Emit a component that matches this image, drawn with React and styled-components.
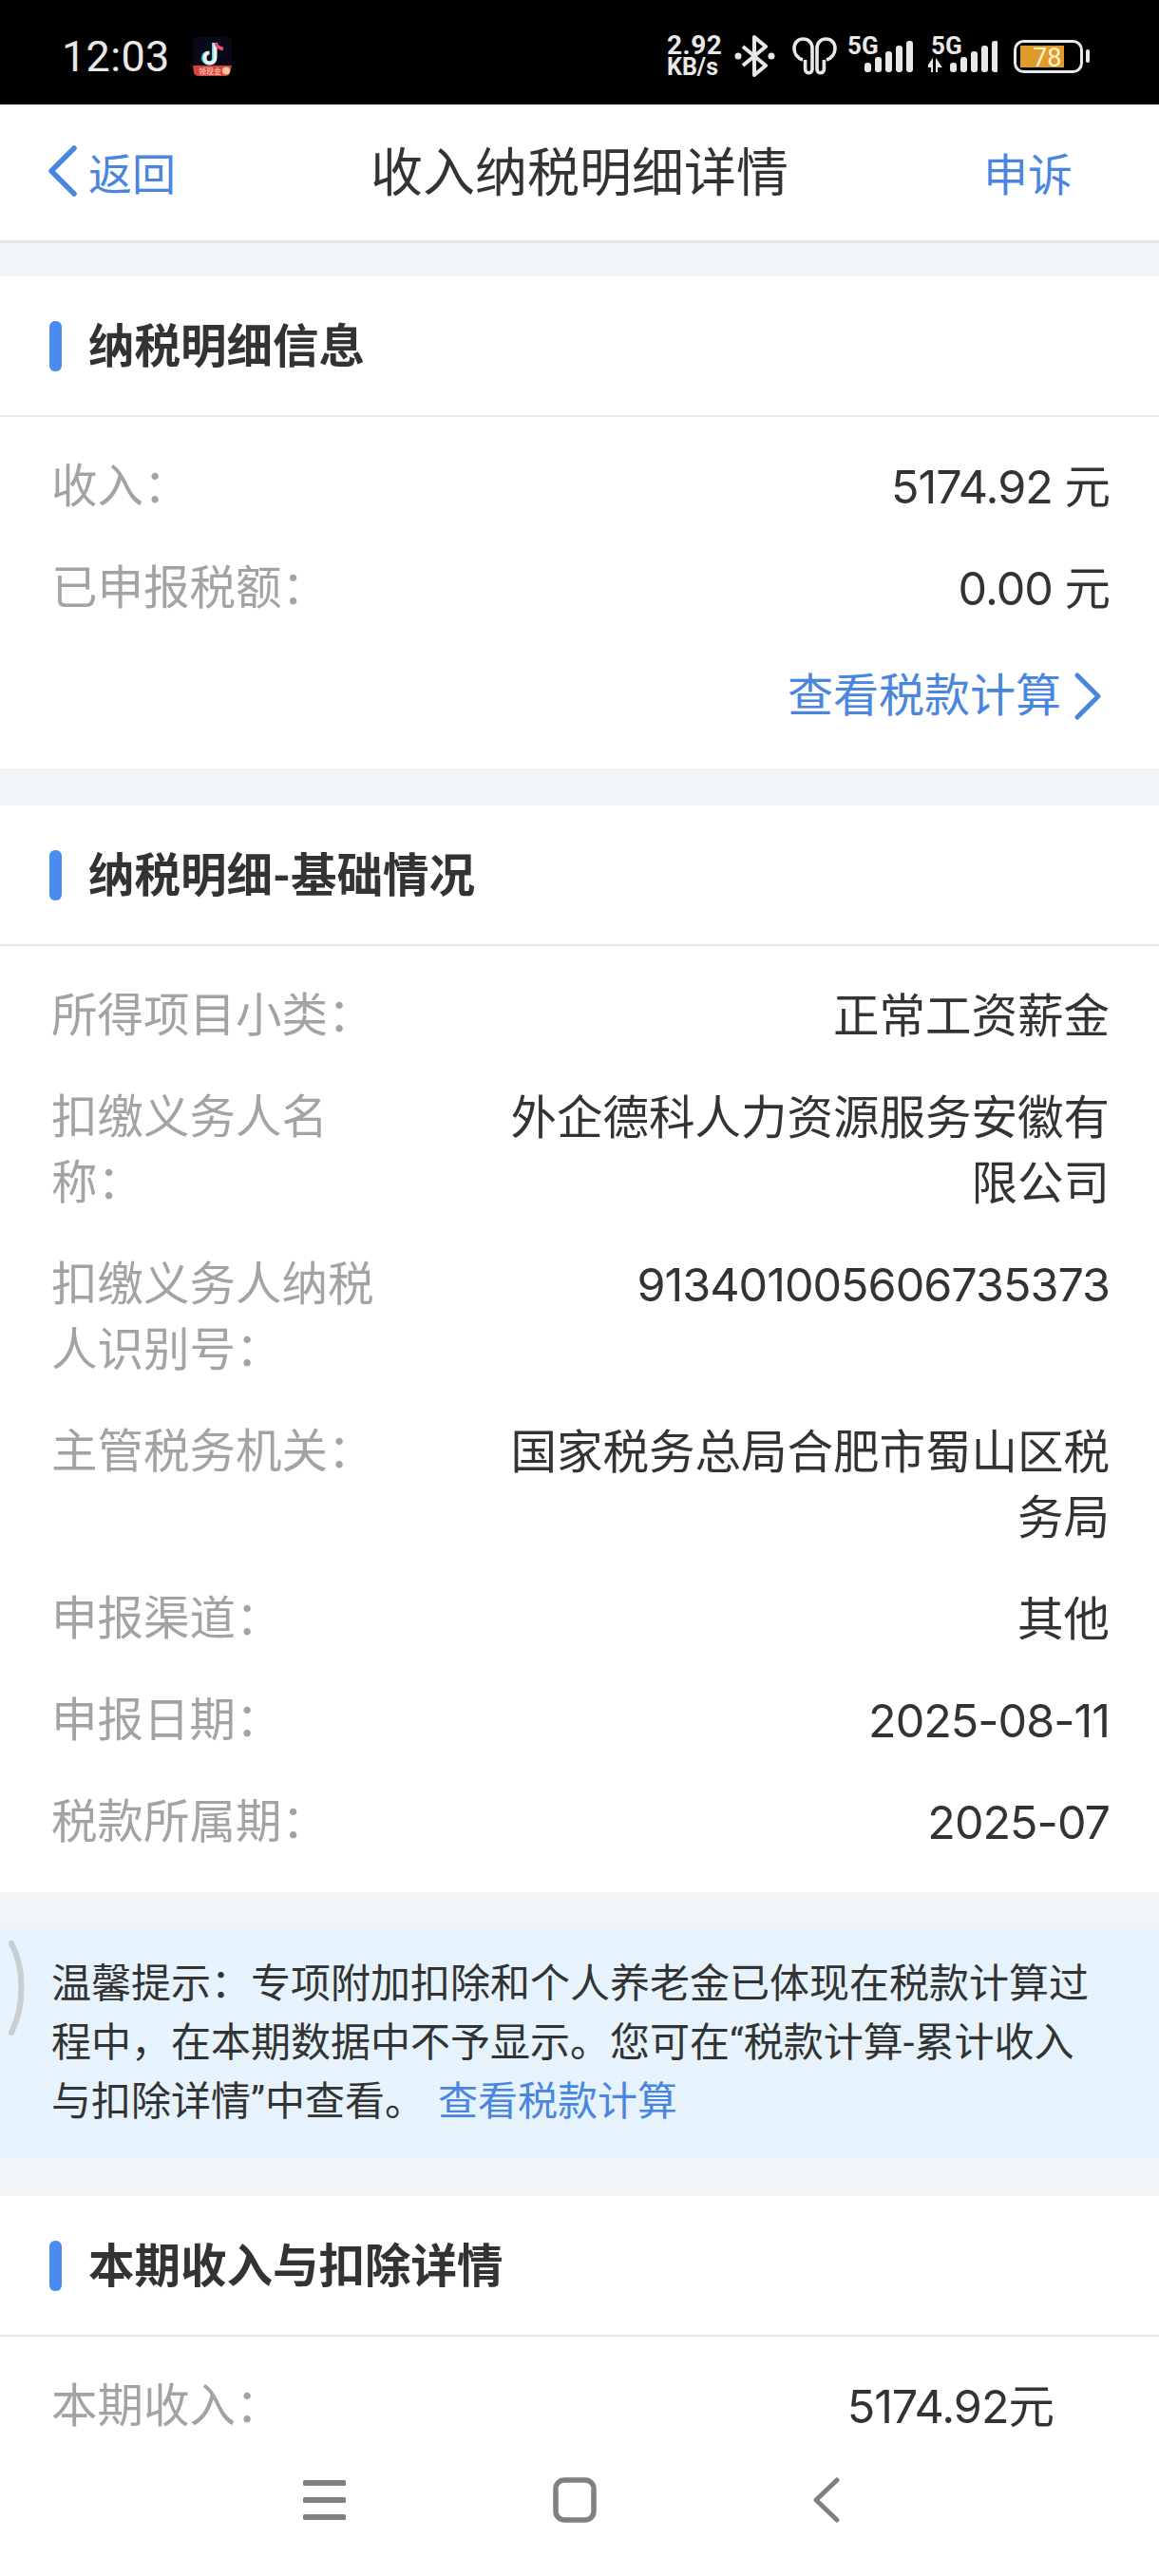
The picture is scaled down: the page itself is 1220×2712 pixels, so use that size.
import React from 'react';
import styled, { createGlobalStyle } from 'styled-components';

const BLUE = '#4a86e0';
const COLON = '\uFF1A';
const COMMA = '\uFF0C';

const GlobalStyle = createGlobalStyle`
  html, body {
    margin: 0;
    padding: 0;
    background: #f2f5f8;
    font-family: Roboto, "Noto Sans CJK SC", sans-serif;
  }
  * { box-sizing: border-box; }
`;

//#region style
const Phone = styled.div`
  position: relative;
  width: 1220px;
  height: 2712px;
  overflow: hidden;
  background: #f2f5f8;
`;

const StatusBar = styled.div`
  display: flex;
  align-items: center;
  height: 110px;
  padding: 8px 72px 0 65px;
  background: #000;
  color: #e8e8e8;
`;

const Time = styled.span`
  font-size: 45px;
  line-height: 1;
  letter-spacing: 0.3px;
  margin-right: 24px;
`;

const StatusRight = styled.div`
  display: flex;
  align-items: center;
  margin-left: auto;
`;

const Speed = styled.div`
  display: flex;
  flex-direction: column;
  width: 58px;
  margin-right: 13px;
  font-family: Roboto, sans-serif;
  font-weight: 700;
  text-align: left;
  white-space: nowrap;
`;

const SpeedValue = styled.span`
  font-size: 28px;
  line-height: 24px;
  letter-spacing: 0.5px;
`;

const SpeedUnit = styled.span`
  font-size: 25px;
  line-height: 22px;
`;

const StatusIcon = styled.svg`
  display: block;
  flex: none;
  margin-right: ${p => p.$gap || 0}px;
`;

const Header = styled.header`
  display: grid;
  grid-template-columns: 1fr auto 1fr;
  align-items: center;
  height: 146px;
  padding: 0 91px 3px;
  background: #fff;
  border-bottom: 3px solid #e4e4e4;
`;

const BackLink = styled.a`
  display: flex;
  align-items: center;
  gap: 11px;
  margin-left: -41px;
  font-size: 46px;
  color: ${BLUE};
`;

const Title = styled.h1`
  margin: 0;
  font-size: 55px;
  font-weight: 400;
  line-height: 1;
  padding-top: 4px;
  color: #333;
`;

const Appeal = styled.a`
  justify-self: end;
  font-size: 47px;
  color: ${BLUE};
`;

const Content = styled.main`
  padding-top: 35px;
`;

const Section = styled.section`
  margin-bottom: ${p => p.$gap || 0}px;
  background: #fff;
`;

const SectionHead = styled.div`
  display: flex;
  align-items: center;
  gap: 28px;
  height: 148px;
  padding-left: 52px;
  border-bottom: 2px solid #e8e8e8;
`;

const Marker = styled.span`
  width: 13px;
  height: 53px;
  border-radius: 6px;
  background: #4a8bf0;
`;

const SectionTitle = styled.h2`
  margin: 0;
  padding-top: 4px;
  font-size: 48.5px;
  font-weight: 700;
  line-height: 1;
  color: #333;
`;

const RowList = styled.div`
  padding: 20px 52px 20px 54px;
`;

const Row = styled.div`
  display: flex;
  justify-content: space-between;
  padding: 19px ${p => p.$inset || 0}px 19px 0;
  font-size: 48.5px;
  line-height: 69px;
`;

const Label = styled.div`
  flex: none;
  width: 342px;
  color: #a3a3a3;
`;

const Value = styled.div`
  width: 640px;
  text-align: right;
  font-family: Inter, "Noto Sans CJK SC", sans-serif;
  letter-spacing: ${p => (p.$num ? '-1px' : '0')};
  color: #333;
`;

const CalcLink = styled.a`
  display: flex;
  justify-content: flex-end;
  align-items: center;
  gap: 14px;
  padding: 0 61px 42px 0;
  margin-top: 5px;
  font-size: 48px;
  line-height: 69px;
  color: ${BLUE};
`;

const Tip = styled.div`
  position: relative;
  margin-bottom: 41px;
  padding: 27px 54px;
  background: #e6f3fc;
  font-size: 42px;
  line-height: 62px;
  color: #333;
`;

const TipLink = styled.a`
  margin-left: 14px;
  color: ${BLUE};
`;

const EdgeHandle = styled.svg`
  position: absolute;
  left: 8px;
  top: 11px;
`;

const NavBar = styled.nav`
  position: absolute;
  left: 0;
  right: 0;
  bottom: 0;
  display: flex;
  align-items: center;
  height: 146px;
  padding: 0 0 15px 319px;
  background: #fff;
`;

const NavIcon = styled.svg`
  display: block;
  flex: none;
  margin-right: ${p => p.$gap || 0}px;
`;
//#endregion style

const Bluetooth = () => (
  <StatusIcon $gap={18} width="43" height="44" viewBox="0 0 43 44" fill="none" stroke="#e8e8e8" strokeWidth="4" strokeLinejoin="round">
    <path d="M9 12 L33 32 L21 42 L21 2 L33 12 L9 32" />
    <circle cx="4" cy="22" r="3.5" fill="#e8e8e8" stroke="none" />
    <circle cx="39" cy="22" r="3.5" fill="#e8e8e8" stroke="none" />
  </StatusIcon>
);

const Earbuds = () => (
  <StatusIcon $gap={11} width="47" height="40" viewBox="0 0 47 40" fill="none" stroke="#e8e8e8" strokeWidth="3.6">
    <path d="M11 24 C5 22 2 17 2 12 C2 6 6 2 11.5 2 C17 2 21 6 21 12 L21 34 A3.6 3.6 0 0 1 13.6 34 L13.6 24" />
    <path d="M36 24 C42 22 45 17 45 12 C45 6 41 2 35.5 2 C30 2 26 6 26 12 L26 34 A3.6 3.6 0 0 0 33.4 34 L33.4 24" />
  </StatusIcon>
);

const SignalBars = ({ x, withArrows }) => (
  <>
    {[10, 16, 22, 28, 33].map((h, i) => (
      <rect key={i} x={x + i * 11} y={43 - h} width="7" height={h} rx="3" fill="#e8e8e8" />
    ))}
    {withArrows && (
      <path d="M4 37 L0 37 L4 31 Z M4 37 L4 43 M9 37 L9 31 L13 37 Z M9 37 L9 43" stroke="#e8e8e8" strokeWidth="2" fill="#e8e8e8" />
    )}
  </>
);

const Signal = ({ width, gap, labelX, barsX, withArrows }) => (
  <StatusIcon $gap={gap} width={width} height="52" viewBox={`0 0 ${width} 52`}>
    <text x={labelX} y="24" fontFamily="Roboto, sans-serif" fontWeight="700" fontSize="26" fill="#e8e8e8">5G</text>
    <SignalBars x={barsX} withArrows={withArrows} />
  </StatusIcon>
);

const Battery = () => (
  <StatusIcon width="81" height="35" viewBox="0 0 81 35">
    <rect x="1.5" y="1.5" width="70" height="32" rx="9" fill="none" stroke="#e8e8e8" strokeWidth="3" />
    <rect x="7" y="6" width="46" height="23" fill="#e09a28" />
    <text x="20" y="28" fontFamily="Roboto, sans-serif" fontSize="27" fill="#fff3d0">78</text>
    <rect x="76" y="10" width="4" height="14" rx="2" fill="#e8e8e8" />
  </StatusIcon>
);

const AppBadge = () => (
  <StatusIcon width="41" height="41" viewBox="0 0 41 41">
    <rect width="41" height="36" rx="5" fill="#080818" />
    <path d="M22 6 L22 22 A5.5 5.5 0 1 1 16 16.5" fill="none" stroke="#35e0e0" strokeWidth="4" />
    <path d="M23.5 6 L23.5 22 A5.5 5.5 0 1 1 17.5 16.5" fill="none" stroke="#f0f0f0" strokeWidth="4" />
    <path d="M24 6 C25 10 28 12 32 12.5" fill="none" stroke="#f05070" strokeWidth="3.5" />
    <path d="M0 30 L41 30 L39 38 Q38 41 34 41 L6 41 Q2 41 1 38 Z" fill="#d8413c" />
    <text x="6" y="39" fontFamily='"Noto Sans CJK SC", sans-serif' fontSize="8" fill="#ffe0d0">领现金</text>
    <circle cx="35" cy="35.5" r="4" fill="#f4c9a0" />
  </StatusIcon>
);

const rowsBasic = [
  ['所得项目小类', '正常工资薪金'],
  ['扣缴义务人名称', '外企德科人力资源服务安徽有限公司'],
  ['扣缴义务人纳税人识别号', '913401005606735373', true],
  ['主管税务机关', '国家税务总局合肥市蜀山区税务局'],
  ['申报渠道', '其他'],
  ['申报日期', '2025-08-11', true],
  ['税款所属期', '2025-07', true],
];

const tipText = `温馨提示${COLON}专项附加扣除和个人养老金已体现在税款计算过程中${COMMA}在本期数据中不予显示。您可在“税款计算-累计收入与扣除详情”中查看。`;

const App = () => {
  return (
    <Phone>
      <GlobalStyle />
      <StatusBar>
        <Time>12:03</Time>
        <AppBadge />
        <StatusRight>
          <Speed>
            <SpeedValue>2.92</SpeedValue>
            <SpeedUnit>KB/s</SpeedUnit>
          </Speed>
          <Bluetooth />
          <Earbuds />
          <Signal width="70" gap={15} labelX={0} barsX={18} />
          <Signal width="73" gap={17} labelX={3} barsX={23} withArrows />
          <Battery />
        </StatusRight>
      </StatusBar>

      <Header>
        <BackLink>
          <svg width="32" height="54" viewBox="0 0 32 54" fill="none" stroke={BLUE} strokeWidth="5.5" strokeLinecap="round" strokeLinejoin="round">
            <path d="M28 3 L4 27 L28 51" />
          </svg>
          返回
        </BackLink>
        <Title>收入纳税明细详情</Title>
        <Appeal>申诉</Appeal>
      </Header>

      <Content>
        <Section $gap={39}>
          <SectionHead>
            <Marker />
            <SectionTitle>纳税明细信息</SectionTitle>
          </SectionHead>
          <RowList>
            <Row>
              <Label>收入{COLON}</Label>
              <Value $num>5174.92 元</Value>
            </Row>
            <Row>
              <Label>已申报税额{COLON}</Label>
              <Value $num>0.00 元</Value>
            </Row>
          </RowList>
          <CalcLink>
            查看税款计算
            <svg width="28" height="50" viewBox="0 0 28 50" fill="none" stroke={BLUE} strokeWidth="5" strokeLinecap="round" strokeLinejoin="round">
              <path d="M3 3 L25 25 L3 47" />
            </svg>
          </CalcLink>
        </Section>

        <Section $gap={39}>
          <SectionHead>
            <Marker />
            <SectionTitle>纳税明细-基础情况</SectionTitle>
          </SectionHead>
          <RowList>
            {rowsBasic.map(([label, value, num]) => (
              <Row key={label}>
                <Label>{label}{COLON}</Label>
                <Value $num={num}>{value}</Value>
              </Row>
            ))}
          </RowList>
        </Section>

        <Tip>
          <EdgeHandle width="22" height="102" viewBox="0 0 22 102" fill="none">
            <path d="M4 4 C18 30 18 70 4 98" stroke="#c9ced2" strokeWidth="6" strokeLinecap="round" />
          </EdgeHandle>
          {tipText}
          <TipLink>查看税款计算</TipLink>
        </Tip>

        <Section>
          <SectionHead>
            <Marker />
            <SectionTitle>本期收入与扣除详情</SectionTitle>
          </SectionHead>
          <RowList>
            <Row $inset={59}>
              <Label>本期收入{COLON}</Label>
              <Value $num>5174.92元</Value>
            </Row>
          </RowList>
        </Section>
      </Content>

      <NavBar>
        <NavIcon $gap={218} width="45" height="42" viewBox="0 0 45 42" fill="#808080">
          <rect width="45" height="6" y="0" rx="1.5" />
          <rect width="45" height="6" y="18" rx="1.5" />
          <rect width="45" height="6" y="36" rx="1.5" />
        </NavIcon>
        <NavIcon $gap={228} width="46" height="48" viewBox="0 0 46 48" fill="none" stroke="#808080" strokeWidth="5.5">
          <rect x="3" y="3" width="40" height="42" rx="9" />
        </NavIcon>
        <NavIcon width="28" height="48" viewBox="0 0 28 48" fill="none" stroke="#808080" strokeWidth="5" strokeLinecap="round" strokeLinejoin="round">
          <path d="M25 3 L3 24 L25 45" />
        </NavIcon>
      </NavBar>
    </Phone>
  );
};

export default App;
